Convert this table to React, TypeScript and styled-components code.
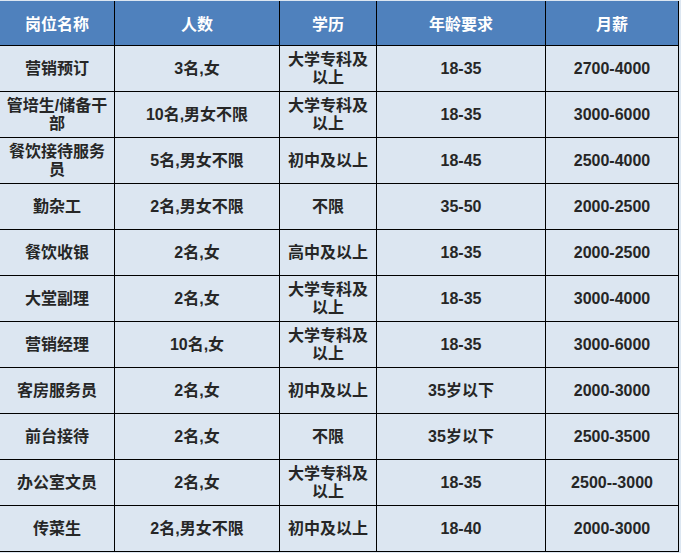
import styled, { createGlobalStyle } from 'styled-components';

const GlobalStyle = createGlobalStyle`
  html, body {
    margin: 0;
    padding: 0;
    background: #dce6f1;
  }
`;

const Page = styled.div`
  padding-top: 1px;
  background: #dce6f1;
  width: 681px;
  height: 553px;
  box-sizing: border-box;
`;

const Table = styled.table`
  border-collapse: separate;
  border-spacing: 0;
  table-layout: fixed;
  width: 679px;
  font-family: 'Liberation Sans', 'Noto Sans CJK SC', sans-serif;
  font-weight: bold;
  font-size: 16px;
  line-height: 18px;
`;

const HeadCell = styled.th`
  background: #4f81bd;
  color: #ffffff;
  height: 45px;
  padding: 4px 5px 0;
  box-sizing: border-box;
  border-right: 1px solid #000;
  border-bottom: 1px solid #000;
  text-align: center;
  font-weight: bold;
`;

const Cell = styled.td`
  background: #dce6f1;
  color: #262626;
  height: 46px;
  padding: 1px 5px 0;
  box-sizing: border-box;
  border-right: 1px solid #000;
  border-bottom: 1px solid #000;
  text-align: center;
  vertical-align: middle;
`;

const widths = [115, 165, 97, 169, 133];
const headers = ['岗位名称', '人数', '学历', '年龄要求', '月薪'];

const rows: string[][] = [
  ['营销预订', '3名,女', '大学专科及以上', '18-35', '2700-4000'],
  ['管培生/储备干部', '10名,男女不限', '大学专科及以上', '18-35', '3000-6000'],
  ['餐饮接待服务员', '5名,男女不限', '初中及以上', '18-45', '2500-4000'],
  ['勤杂工', '2名,男女不限', '不限', '35-50', '2000-2500'],
  ['餐饮收银', '2名,女', '高中及以上', '18-35', '2000-2500'],
  ['大堂副理', '2名,女', '大学专科及以上', '18-35', '3000-4000'],
  ['营销经理', '10名,女', '大学专科及以上', '18-35', '3000-6000'],
  ['客房服务员', '2名,女', '初中及以上', '35岁以下', '2000-3000'],
  ['前台接待', '2名,女', '不限', '35岁以下', '2500-3500'],
  ['办公室文员', '2名,女', '大学专科及以上', '18-35', '2500--3000'],
  ['传菜生', '2名,男女不限', '初中及以上', '18-40', '2000-3000'],
];

export default function App() {
  return (
    <Page>
      <GlobalStyle />
      <Table>
        <colgroup>
          {widths.map((w, i) => (
            <col key={i} style={{ width: w }} />
          ))}
        </colgroup>
        <thead>
          <tr>
            {headers.map((h) => (
              <HeadCell key={h}>{h}</HeadCell>
            ))}
          </tr>
        </thead>
        <tbody>
          {rows.map((r, i) => (
            <tr key={i}>
              {r.map((c, j) => (
                <Cell key={j}>{c}</Cell>
              ))}
            </tr>
          ))}
        </tbody>
      </Table>
    </Page>
  );
}
